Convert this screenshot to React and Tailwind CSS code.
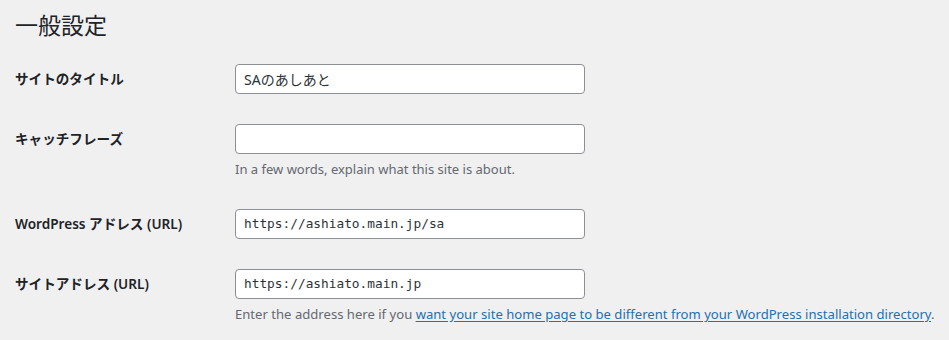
export default function App() {
  const sans = "font-['Noto_Sans','Noto_Sans_CJK_JP',sans-serif]";
  return (
    <div className={`min-h-[340px] w-[949px] bg-[#f0f0f1] text-[#1d2327] ${sans}`}>
      <div className="pl-[15px]">
        <h1 className="pt-[9px] pb-[4px] text-[23px] font-normal leading-[30px] font-['Noto_Sans_CJK_JP',sans-serif]">一般設定</h1>
        <div className="mt-[6px] flex flex-col">
          <Row label="サイトのタイトル">
            <Input value="SAのあしあと" />
          </Row>
          <Row label="キャッチフレーズ">
            <Input value="" />
            <p className="mt-[6px] text-[13px] leading-[19px] text-[#646970]">
              In a few words, explain what this site is about.
            </p>
          </Row>
          <Row label="WordPress アドレス (URL)">
            <Input value="https://ashiato.main.jp/sa" mono />
          </Row>
          <Row label="サイトアドレス (URL)">
            <Input value="https://ashiato.main.jp" mono />
            <p className="mt-[6px] text-[13.1px] leading-[19px] text-[#646970] whitespace-nowrap">
              Enter the address here if you{" "}
              <a href="#" className="text-[#2271b1] underline underline-offset-2">
                want your site home page to be different from your WordPress installation directory
              </a>
              .
            </p>
          </Row>
        </div>
      </div>
    </div>
  );
}

function Row({ label, children }) {
  return (
    <div className="flex py-[15px]">
      <div className="w-[220px] shrink-0 pt-[6px] text-[13.6px] font-semibold leading-[18px]">{label}</div>
      <div className="flex flex-col">{children}</div>
    </div>
  );
}

function Input({ value, mono }) {
  return (
    <div
      className={`flex h-[30px] w-[350px] items-center rounded-[4px] border border-[#8c8f94] bg-white px-[8px] text-[#2c3338] ${
        mono ? "font-['DejaVu_Sans_Mono',monospace] text-[12.8px]" : "text-[14px]"
      }`}
    >
      {value}
    </div>
  );
}
